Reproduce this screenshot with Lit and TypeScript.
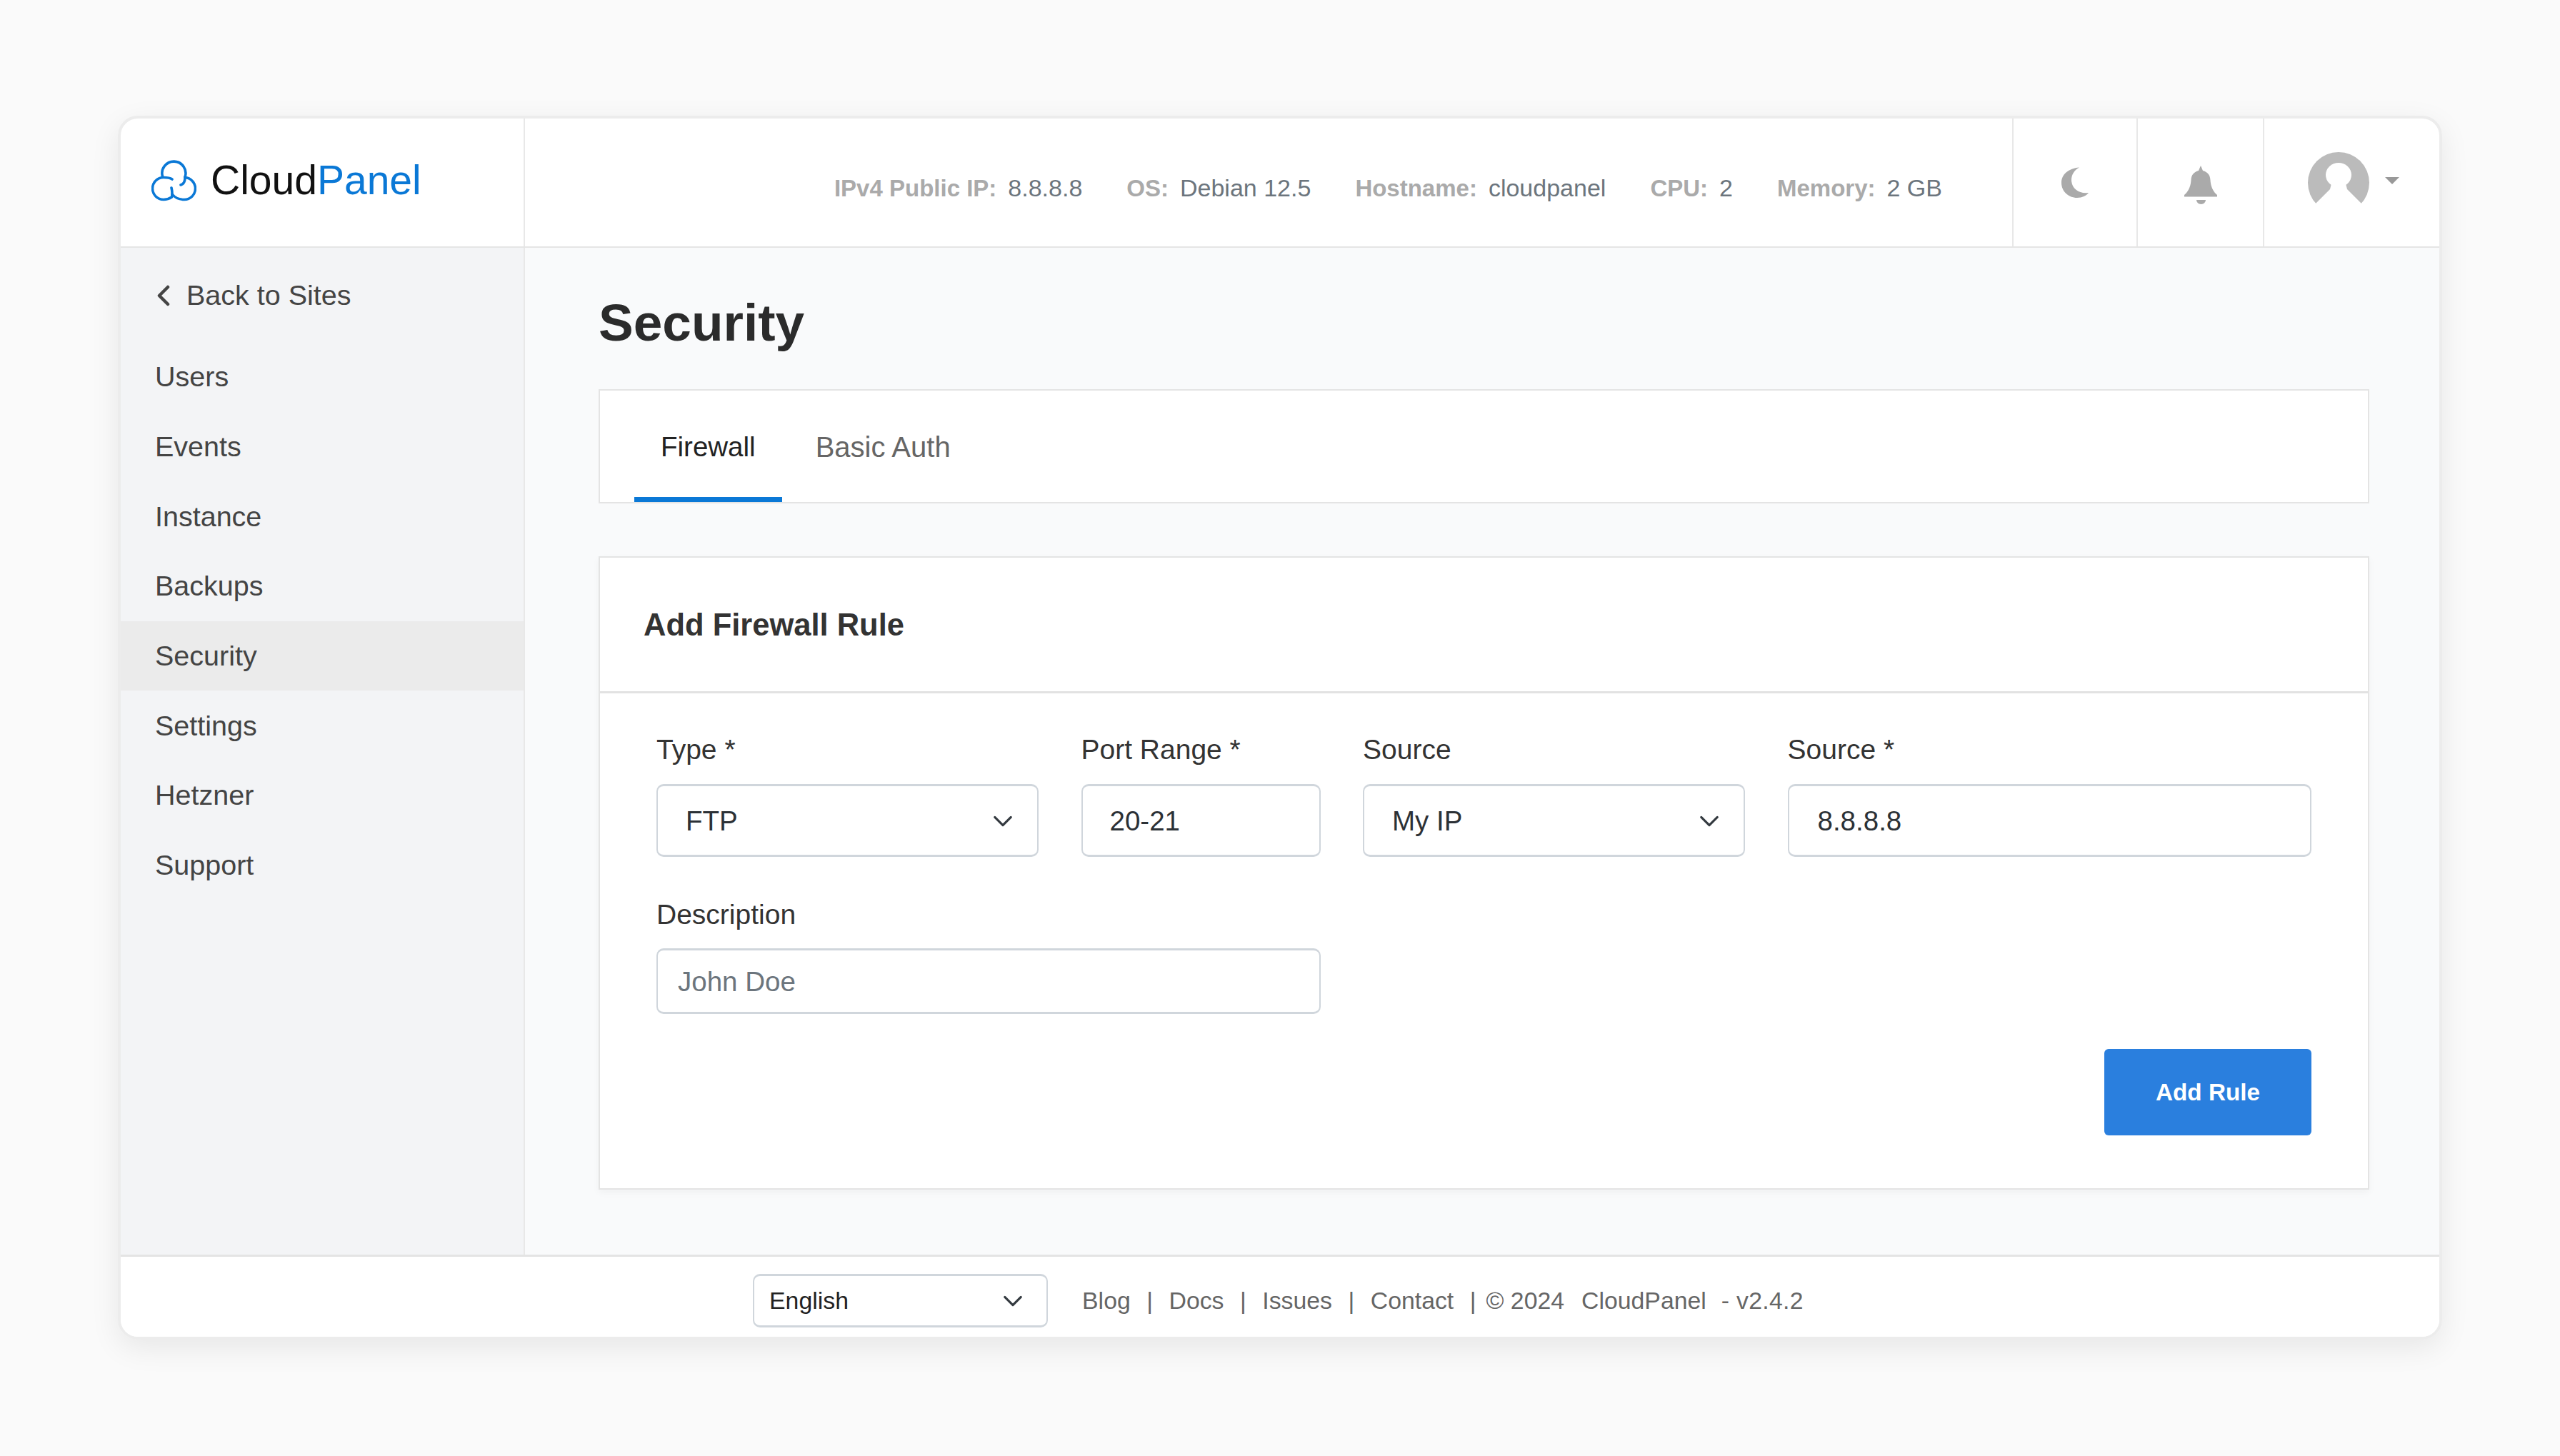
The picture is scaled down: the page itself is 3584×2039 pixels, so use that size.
import { LitElement, html, css } from "lit";
import { customElement } from "lit/decorators.js";

const chevron = html`<svg class="chev" viewBox="0 0 16 16" fill="none" stroke="currentColor" stroke-width="1.700" stroke-linecap="round" stroke-linejoin="round"><path d="M2 5l6 6 6-6"/></svg>`;

const logo = html`<svg class="logo-icon" viewBox="0 0 63 58" fill="none" stroke="#0a78d6" stroke-width="3.600" stroke-linecap="round"><path d="M15.500 23A16.500 16.500 0 1 1 47 24"/><path d="M29 27C26 25 22 24.500 17 24.500A15.500 15.500 0 0 0 17 55.500C22 55.500 25.500 54 28.500 52C29.500 47 29 43 28 39"/><path d="M41 35C44.500 34 47 30.500 47 24.500C55 25 61.500 32 61.500 40A15.500 15.500 0 0 1 46 55.500C39 55.500 33 53 29 48"/></svg>`;

const moon = html`<svg class="moon" viewBox="0 0 38 43" fill="#aaa"><path d="M25 .5C10 2 0 10 0 22C0 34 10 43 22 43C29 43 35 40 38 36C25 38 14 30 14 18C14 11 18 4 25 .5Z"/></svg>`;

const bell = html`<svg class="bell" viewBox="0 0 46 54" fill="#aaa"><path d="M23 0L26 7C33 9 36 13 36.500 20C37 29 40 36 46 41V43.500H0V41C6 36 9 29 9.500 20C10 13 13 9 20 7Z"/><path d="M17 48H30C30 51 27 54 23.500 54C20 54 17 51 17 48Z"/></svg>`;

const avatar = html`<svg class="avatar" viewBox="0 0 86 86"><circle cx="43" cy="43" r="43" fill="#bbb"/><ellipse cx="43" cy="32" rx="18" ry="17" fill="#fff"/><path d="M33 44L31 52L11 72L5 90H81L75 72L55 52L53 44Z" fill="#fff"/></svg>`;

const NAV = ["Users", "Events", "Instance", "Backups", "Security", "Settings", "Hetzner", "Support"];
const INFO = [
  ["IPv4 Public IP:", "8.8.8.8"],
  ["OS:", "Debian 12.5"],
  ["Hostname:", "cloudpanel"],
  ["CPU:", "2"],
  ["Memory:", "2 GB"],
];

@customElement("app-root")
export class AppRoot extends LitElement {
  static styles = css`
    :host {
      display: block;
      box-sizing: border-box;
      width: 3584px;
      height: 2039px;
      padding: 162px 165px 0;
      background: #fafafa;
      font-family: "Liberation Sans", Arial, sans-serif;
      color: #444;
    }
    * { box-sizing: border-box; }
    .window {
      width: 3254px;
      height: 1714px;
      border: 4px solid #ececec;
      border-radius: 28px;
      background: #fff;
      overflow: hidden;
      display: flex;
      flex-direction: column;
    }
    .shadow {
      border-radius: 28px;
      box-shadow: 0 12px 40px rgba(0, 0, 0, 0.08);
    }
    .header {
      height: 181px;
      flex: none;
      display: flex;
      align-items: stretch;
      border-bottom: 2px solid #e5e5e5;
    }
    .brand {
      width: 566px;
      flex: none;
      border-right: 2px solid #e8e8e8;
      display: flex;
      align-items: center;
      gap: 20px;
      padding: 0 0 6px 43px;
    }
    .logo-icon { width: 63px; height: 58px; flex: none; }
    .brand-text { font-size: 57px; color: #111; line-height: 1; }
    .brand-text span { color: #0a78d6; }
    .info {
      flex: 1;
      display: flex;
      justify-content: flex-end;
      align-items: center;
      gap: 62px;
      padding: 16px 98px 0 0;
      font-size: 34px;
      color: #6c757d;
    }
    .info b { color: #aaa; font-size: 33px; margin-right: 16px; }
    .icon-cell {
      flex: none;
      border-left: 2px solid #e8e8e8;
      display: flex;
      align-items: center;
      justify-content: center;
    }
    .c-moon { width: 174px; }
    .c-bell { width: 177px; }
    .c-user { width: 247px; gap: 22px; justify-content: flex-start; padding-left: 61px; }
    .moon { width: 38px; height: 43px; }
    .bell { width: 46px; height: 54px; margin-top: 6px; }
    .avatar { width: 86px; height: 86px; }
    .caret {
      width: 0;
      height: 0;
      border-left: 10px solid transparent;
      border-right: 10px solid transparent;
      border-top: 10px solid #999;
      margin-bottom: 6px;
    }
    .body { flex: 1; display: flex; min-height: 0; }
    .sidebar {
      width: 566px;
      flex: none;
      background: #f3f4f6;
      border-right: 2px solid #e8e8e8;
      padding-top: 18px;
      font-size: 39.500px;
      color: #444;
    }
    .back {
      height: 97px;
      margin-bottom: 17px;
      display: flex;
      align-items: center;
      gap: 22px;
      padding-left: 50px;
    }
    .back svg { width: 20px; height: 30px; }
    .nav {
      height: 97.700px;
      display: flex;
      align-items: center;
      padding-left: 48px;
    }
    .nav.active { background: #ebebeb; }
    .main {
      flex: 1;
      background: #f9fafb;
      padding: 60px 98px 0 103px;
      min-width: 0;
    }
    h1 {
      margin: 0 0 48px;
      font-size: 73px;
      line-height: 90px;
      font-weight: 700;
      color: #2b2b2b;
    }
    .tabs {
      height: 160px;
      background: #fff;
      border: 2px solid #e4e4e4;
      display: flex;
      padding-left: 48px;
      font-size: 38.500px;
    }
    .tab {
      display: flex;
      align-items: center;
      padding: 2px 37px 0;
      margin-right: 10px;
      color: #666;
    }
    .tab.basic { font-size: 40px; }
    .tab.active { color: #222; border-bottom: 7px solid #0a78d6; padding-top: 9px; }
    .card {
      margin-top: 74px;
      height: 887px;
      background: #fff;
      border: 2px solid #e4e4e4;
      box-shadow: 0 4px 10px rgba(0, 0, 0, 0.04);
    }
    .card-head {
      height: 190px;
      border-bottom: 3px solid #e2e2e2;
      display: flex;
      align-items: center;
      padding: 2px 0 0 61px;
      font-size: 43.500px;
      font-weight: 700;
      color: #333;
    }
    .form { padding: 49px 79px 0 79px; }
    .grid {
      display: grid;
      grid-template-columns: 535px 335px 535px 1fr;
      column-gap: 59.500px;
    }
    .field.wide { grid-column: span 2; }
    .row2 { margin-top: 51px; }
    label {
      display: block;
      height: 58px;
      line-height: 60px;
      margin-bottom: 20px;
      font-size: 39px;
      color: #333;
    }
    .row2 label { margin-bottom: 19px; }
    .control {
      height: 102px;
      border-style: solid;
      border-color: #d0d6dc;
      border-width: 3px 2px;
      border-radius: 10px;
      display: flex;
      align-items: center;
      justify-content: space-between;
      padding: 2px 33px 0 39px;
      font-size: 38.500px;
      color: #2c3136;
      background: #fff;
    }
    .control.small { height: 92px; padding-left: 28px; color: #6c757d; }
    .control.pad2 { padding-left: 38px; }
    .control.pad3 { padding-left: 40px; }
    .chev { width: 30px; height: 30px; color: #343a40; flex: none; }
    .actions { display: flex; justify-content: flex-end; margin-top: 49px; }
    .btn {
      width: 290px;
      height: 121px;
      border-radius: 6px;
      background: #2a7fde;
      color: #fff;
      font-size: 33.300px;
      font-weight: 700;
      display: flex;
      align-items: center;
      justify-content: center;
    }
    .footer {
      flex: none;
      height: 115px;
      border-top: 3px solid #e4e4e4;
      display: flex;
      align-items: center;
      justify-content: center;
      padding: 11px 5px 0 0;
      font-size: 33.800px;
      color: #666;
      background: #fff;
    }
    .lang {
      width: 413px;
      height: 75px;
      border-style: solid;
      border-color: #d0d6dc;
      border-width: 3px 2px;
      border-radius: 10px;
      display: flex;
      align-items: center;
      justify-content: space-between;
      padding: 0 32px 0 21px;
      color: #222;
      margin-right: 48px;
    }
    .sep { margin: 0 22.500px; }
    .sep.last { margin-right: 14px; }
    .gap { margin-left: 24px; }
    .gap2 { margin-left: 21px; letter-spacing: 0.3px; }
  `;

  render() {
    return html`
      <div class="shadow">
        <div class="window">
          <div class="header">
            <div class="brand">
              ${logo}
              <div class="brand-text">Cloud<span>Panel</span></div>
            </div>
            <div class="info">
              ${INFO.map(([k, v]) => html`<div><b>${k}</b>${v}</div>`)}
            </div>
            <div class="icon-cell c-moon">${moon}</div>
            <div class="icon-cell c-bell">${bell}</div>
            <div class="icon-cell c-user">${avatar}<span class="caret"></span></div>
          </div>
          <div class="body">
            <div class="sidebar">
              <div class="back">
                <svg viewBox="0 0 20 30" fill="none" stroke="#444" stroke-width="4.500" stroke-linecap="round" stroke-linejoin="round"><path d="M16 3L4 15l12 12"/></svg>
                Back to Sites
              </div>
              ${NAV.map((n) => html`<div class="nav ${n === "Security" ? "active" : ""}">${n}</div>`)}
            </div>
            <div class="main">
              <h1>Security</h1>
              <div class="tabs">
                <div class="tab active">Firewall</div>
                <div class="tab basic">Basic Auth</div>
              </div>
              <div class="card">
                <div class="card-head">Add Firewall Rule</div>
                <div class="form">
                  <div class="grid">
                    <div class="field"><label>Type *</label><div class="control">FTP ${chevron}</div></div>
                    <div class="field"><label>Port Range *</label><div class="control pad2">20-21</div></div>
                    <div class="field"><label>Source</label><div class="control">My IP ${chevron}</div></div>
                    <div class="field"><label>Source *</label><div class="control pad3">8.8.8.8</div></div>
                  </div>
                  <div class="grid row2">
                    <div class="field wide"><label>Description</label><div class="control small">John Doe</div></div>
                  </div>
                  <div class="actions"><div class="btn">Add Rule</div></div>
                </div>
              </div>
            </div>
          </div>
          <div class="footer">
            <div class="lang">English ${chevron}</div>
            <span>Blog</span><span class="sep">|</span>
            <span>Docs</span><span class="sep">|</span>
            <span>Issues</span><span class="sep">|</span>
            <span>Contact</span><span class="sep last">|</span>
            <span>© 2024</span><span class="gap">CloudPanel</span><span class="gap2">- v2.4.2</span>
          </div>
        </div>
      </div>
    `;
  }
}
